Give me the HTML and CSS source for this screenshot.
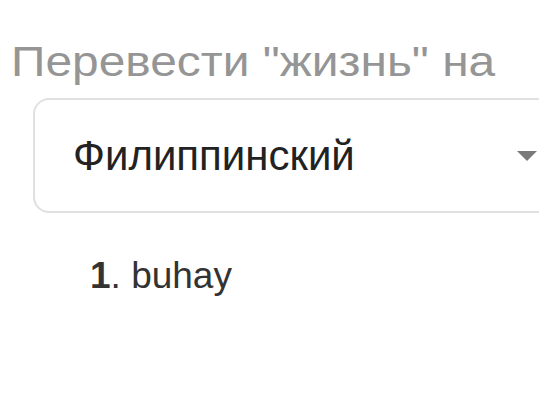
FILE: index.html
```html
<!DOCTYPE html>
<html lang="ru">
<head>
<meta charset="utf-8">
<link rel="stylesheet" href="styles.css">
</head>
<body>
  <div class="page">
    <h1 class="prompt"><span class="prompt-text">Перевести "жизнь" на</span></h1>
    <div class="select">
      <span class="select-value">Филиппинский</span>
      <span class="select-arrow"></span>
    </div>
    <ol class="results">
      <li class="result"><span class="num">1</span>. buhay</li>
    </ol>
  </div>
</body>
</html>
```

FILE: styles.css
```css
html, body {
  margin: 0;
  padding: 0;
  background: #fff;
  overflow: hidden;
}

.page {
  width: 539px;
  height: 418px;
  overflow: hidden;
  font-family: "Liberation Sans", Arial, sans-serif;
}

.prompt {
  margin: 0;
  padding: 38px 0 0 11px;
  font-size: 42px;
  font-weight: normal;
  line-height: 48px;
  color: #959595;
  white-space: nowrap;
}

/* wide light heading face */
.prompt-text {
  display: inline-block;
  transform: scaleX(1.14);
  transform-origin: left center;
}

.select {
  box-sizing: border-box;
  margin: 12px 0 0 33px;
  width: 540px;
  height: 115px;
  border: 2px solid #e0e0e0;
  border-radius: 16px;
  display: flex;
  align-items: center;
  padding-left: 38px;
}

.select-value {
  font-size: 42px;
  color: #222;
  flex: 1;
}

.select-arrow {
  width: 0;
  height: 0;
  border-left: 10px solid transparent;
  border-right: 10px solid transparent;
  border-top: 10px solid #7a7a7a;
  margin-right: 34px;
}

.results {
  list-style: none;
  margin: 0;
  padding: 43px 0 0 90px;
}

.result {
  font-size: 37px;
  line-height: 40px;
  color: #333;
}

.num {
  font-weight: bold;
}
```
